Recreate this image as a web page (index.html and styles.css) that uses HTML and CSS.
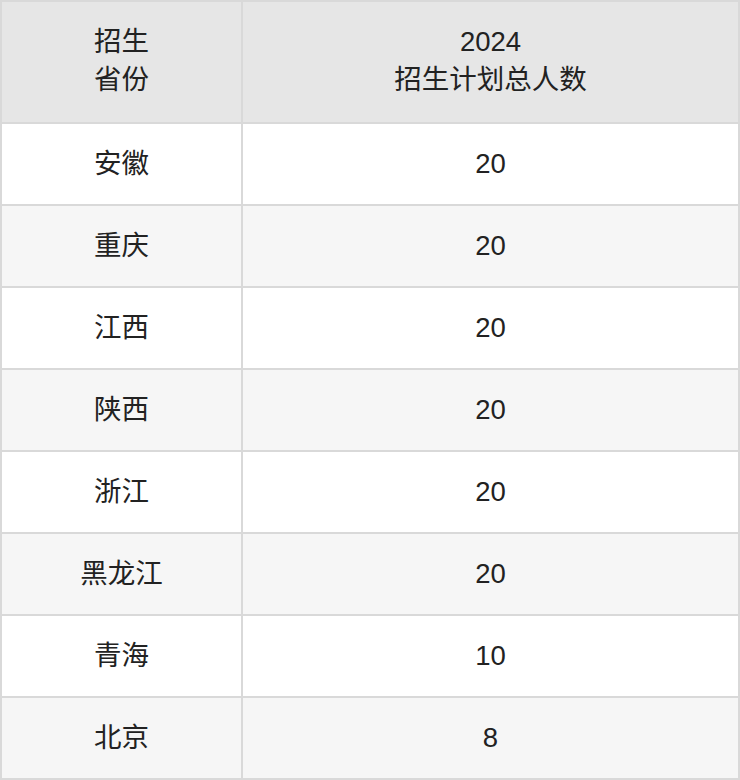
FILE: index.html
```html
<!DOCTYPE html>
<html lang="zh">
<head>
<meta charset="utf-8">
<link rel="stylesheet" href="styles.css">
</head>
<body>
<table class="plan">
  <colgroup><col class="c1"><col class="c2"></colgroup>
  <thead>
    <tr><th>招生<br>省份</th><th>2024<br>招生计划总人数</th></tr>
  </thead>
  <tbody>
    <tr><td>安徽</td><td>20</td></tr>
    <tr><td>重庆</td><td>20</td></tr>
    <tr><td>江西</td><td>20</td></tr>
    <tr><td>陕西</td><td>20</td></tr>
    <tr><td>浙江</td><td>20</td></tr>
    <tr><td>黑龙江</td><td>20</td></tr>
    <tr><td>青海</td><td>10</td></tr>
    <tr><td>北京</td><td>8</td></tr>
  </tbody>
</table>
</body>
</html>
```
FILE: styles.css
```css
html, body {
  margin: 0;
  padding: 0;
  background: #ffffff;
}
.plan {
  width: 740px;
  table-layout: fixed;
  border-collapse: separate;
  border-spacing: 0;
  border-top: 2px solid #d9d9d9;
  border-left: 2px solid #d9d9d9;
  font-family: "Liberation Sans", "Noto Sans CJK SC", sans-serif;
  font-size: 27.5px;
  color: #222222;
}
.c1 { width: 241px; }
.c2 { width: 497px; }
.plan th,
.plan td {
  box-sizing: border-box;
  padding: 0;
  border-right: 2px solid #d9d9d9;
  border-bottom: 2px solid #d9d9d9;
  text-align: center;
  vertical-align: middle;
  font-weight: normal;
}
.plan th {
  height: 122px;
  line-height: 38px;
  background: #e6e6e6;
  padding-bottom: 2px;
}
.plan td {
  height: 82px;
  line-height: 38px;
}
.plan tbody tr:nth-child(odd) td { background: #ffffff; }
.plan tbody tr:nth-child(even) td { background: #f6f6f6; }
```
